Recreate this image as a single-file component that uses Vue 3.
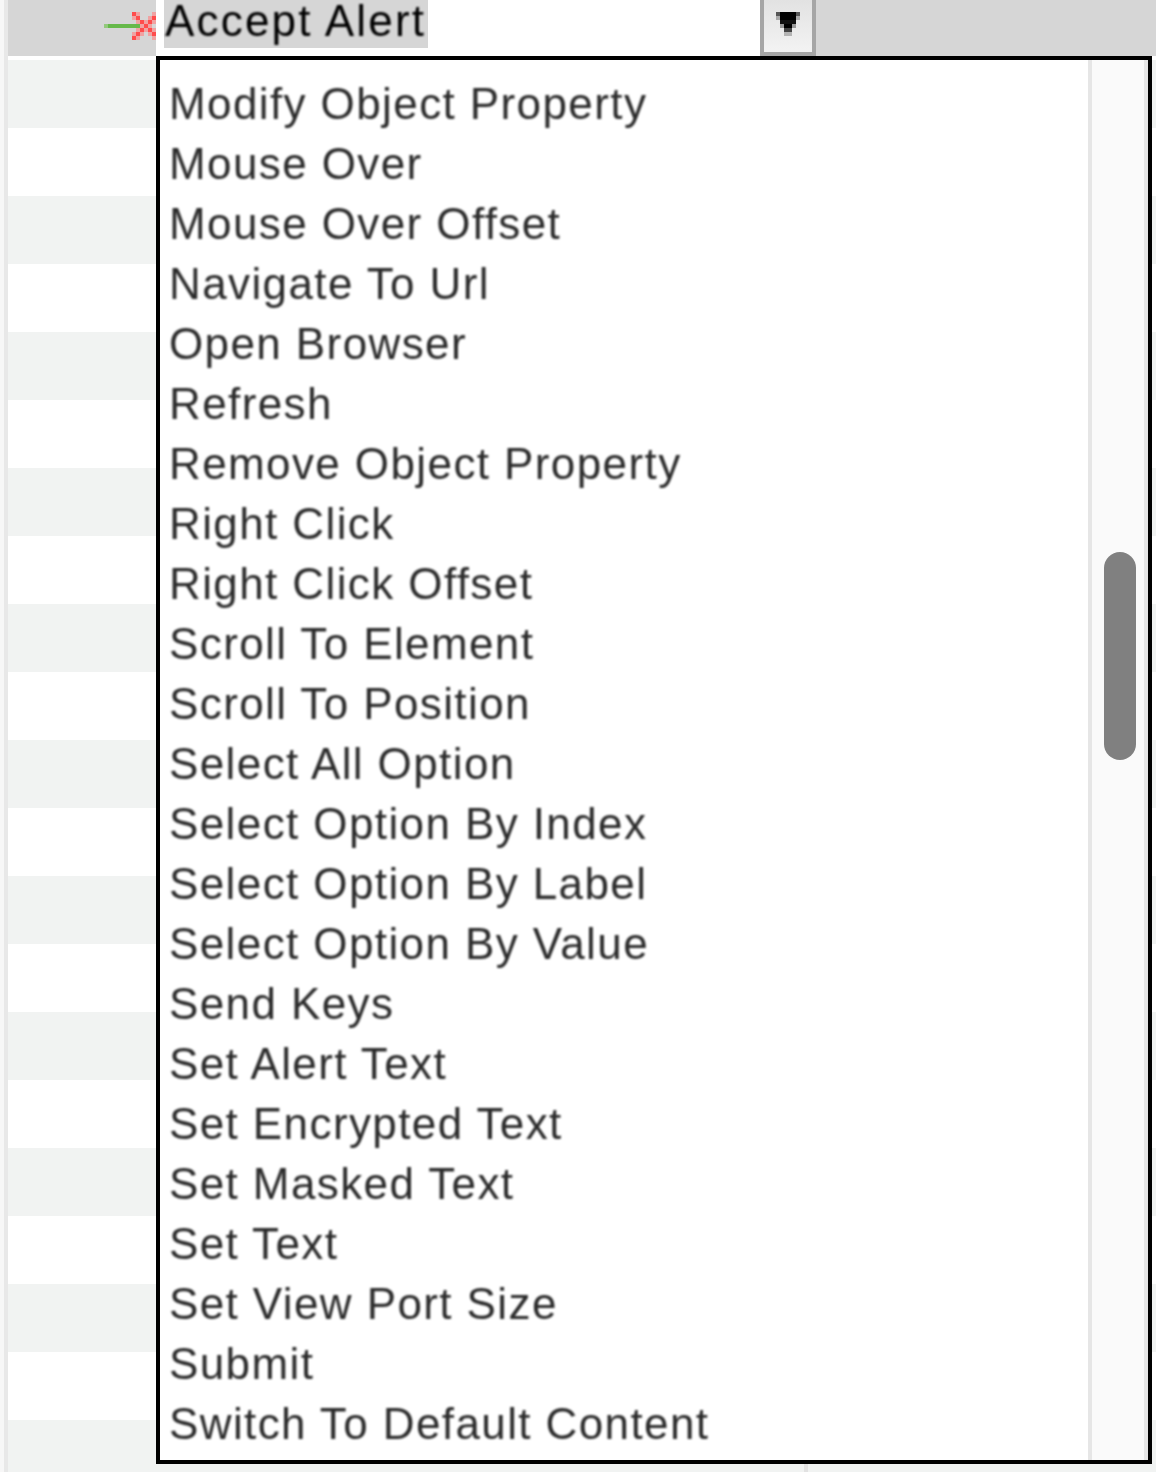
<script setup>
const rowCount = 21
const items = [
  'Modify Object Property', 'Mouse Over', 'Mouse Over Offset', 'Navigate To Url', 'Open Browser',
  'Refresh', 'Remove Object Property', 'Right Click', 'Right Click Offset', 'Scroll To Element',
  'Scroll To Position', 'Select All Option', 'Select Option By Index', 'Select Option By Label',
  'Select Option By Value', 'Send Keys', 'Set Alert Text', 'Set Encrypted Text', 'Set Masked Text',
  'Set Text', 'Set View Port Size', 'Submit', 'Switch To Default Content'
]
// 4px pixel grid of the red cross: S strong, L light, '.' empty
const cross = ['SL...L', 'LS..LS', '.LSLSL', '..LSL.', '.LSLSL', 'LSL.LS', 'SL...L']
const crossPixels = cross.flatMap((line, r) =>
  [...line].map((ch, c) => ({ ch, x: 28 + c * 4, y: r * 4 })).filter((p) => p.ch !== '.')
)
</script>

<template>
  <div class="page">
    <div class="gutter"></div>
    <div class="table">
      <div class="head">
        <div class="link">
          <svg class="link-icon" width="52" height="28" viewBox="0 0 52 28" aria-hidden="true">
            <rect x="0" y="12" width="4" height="4" fill="#93c97c" />
            <rect x="4" y="12" width="32" height="4" fill="#66b94a" />
            <rect
              v-for="p in crossPixels"
              :key="`${p.x}-${p.y}`"
              :x="p.x"
              :y="p.y"
              width="4"
              height="4"
              :fill="p.ch === 'S' ? '#ff4c4c' : '#f0a2a2'"
            />
          </svg>
        </div>
        <div class="select">
          <span class="value"><span class="value-text">Accept Alert</span></span>
          <span class="button">
            <svg width="24" height="24" viewBox="0 0 24 24" aria-hidden="true">
              <rect x="0" y="0" width="24" height="4" fill="#555" />
              <rect x="4" y="0" width="16" height="4" fill="#000" />
              <rect x="0" y="4" width="24" height="4" fill="#a8a8a8" />
              <rect x="4" y="4" width="16" height="4" fill="#000" />
              <rect x="4" y="8" width="16" height="4" fill="#111" />
              <rect x="4" y="12" width="16" height="4" fill="#999" />
              <rect x="8" y="12" width="8" height="4" fill="#000" />
              <rect x="8" y="16" width="8" height="4" fill="#444" />
              <rect x="8" y="20" width="8" height="4" fill="#b4b4b4" />
            </svg>
          </span>
        </div>
      </div>
      <div class="rows">
        <div v-for="n in rowCount" :key="n" class="row" :class="{ odd: n % 2 === 1 }">
          <div class="cell"></div>
        </div>
      </div>
    </div>
    <div class="menu">
      <ul class="list">
        <li v-for="item in items" :key="item">{{ item }}</li>
      </ul>
      <div class="track"><div class="thumb"></div></div>
    </div>
  </div>
</template>

<style scoped>
.page {
  position: relative;
  display: flex;
  width: 1156px;
  height: 1472px;
  overflow: hidden;
  background: #fff;
  font-family: "Liberation Sans", Arial, sans-serif;
}
.gutter {
  flex: none;
  width: 4px;
  background: #e8e8e8;
  border-left: 4px solid #f7f7f7;
}
.table {
  flex: 1;
  min-width: 0;
}
.head {
  display: flex;
  height: 56px;
  background: #d6d6d6;
}
.link {
  flex: none;
  width: 148px;
  position: relative;
}
.link-icon {
  position: absolute;
  left: 96px;
  top: 12px;
}
.select {
  flex: none;
  width: 660px;
  box-sizing: border-box;
  display: flex;
  justify-content: space-between;
  background: #fff;
  padding-left: 8px;
}
.value {
  height: 48px;
  line-height: 41px;
  padding: 0 2px 0 1px;
  font-size: 44px;
  letter-spacing: 2.2px;
  color: #000;
  background: #d6d6d6;
}
.value-text {
  display: inline-block;
  filter: blur(0.9px);
}
.button {
  width: 56px;
  height: 56px;
  box-sizing: border-box;
  border: 4px solid #a6a6a6;
  border-top: 0;
  background: linear-gradient(#e2e2e2, #f3f3f3);
  display: flex;
  justify-content: center;
  padding-top: 12px;
}
.rows {
  padding-top: 4px;
}
.row {
  height: 68px;
  background: #fff;
}
.row.odd {
  background: #f1f3f2;
}
.cell {
  width: 800px;
  height: 100%;
  box-sizing: border-box;
  border-right: 4px solid #e2e2e2;
}
.menu {
  position: absolute;
  left: 156px;
  top: 56px;
  width: 996px;
  height: 1408px;
  box-sizing: border-box;
  border: 4px solid #000;
  display: flex;
  background: #fff;
  overflow: hidden;
}
.list {
  flex: 1;
  margin: 0;
  padding: 14px 0 0 9px;
  list-style: none;
  font-size: 44px;
  line-height: 60px;
  letter-spacing: 1.4px;
  color: #2b2b2b;
  filter: blur(0.9px);
}
.list li {
  height: 60px;
  white-space: nowrap;
}
.track {
  flex: none;
  width: 60px;
  height: 100%;
  box-sizing: border-box;
  background: #fafafa;
  border-left: 4px solid #e6e6e6;
  border-right: 4px solid #e6e6e6;
  padding: 492px 8px 0 12px;
}
.thumb {
  width: 32px;
  height: 208px;
  border-radius: 16px;
  background: #808080;
}
</style>
